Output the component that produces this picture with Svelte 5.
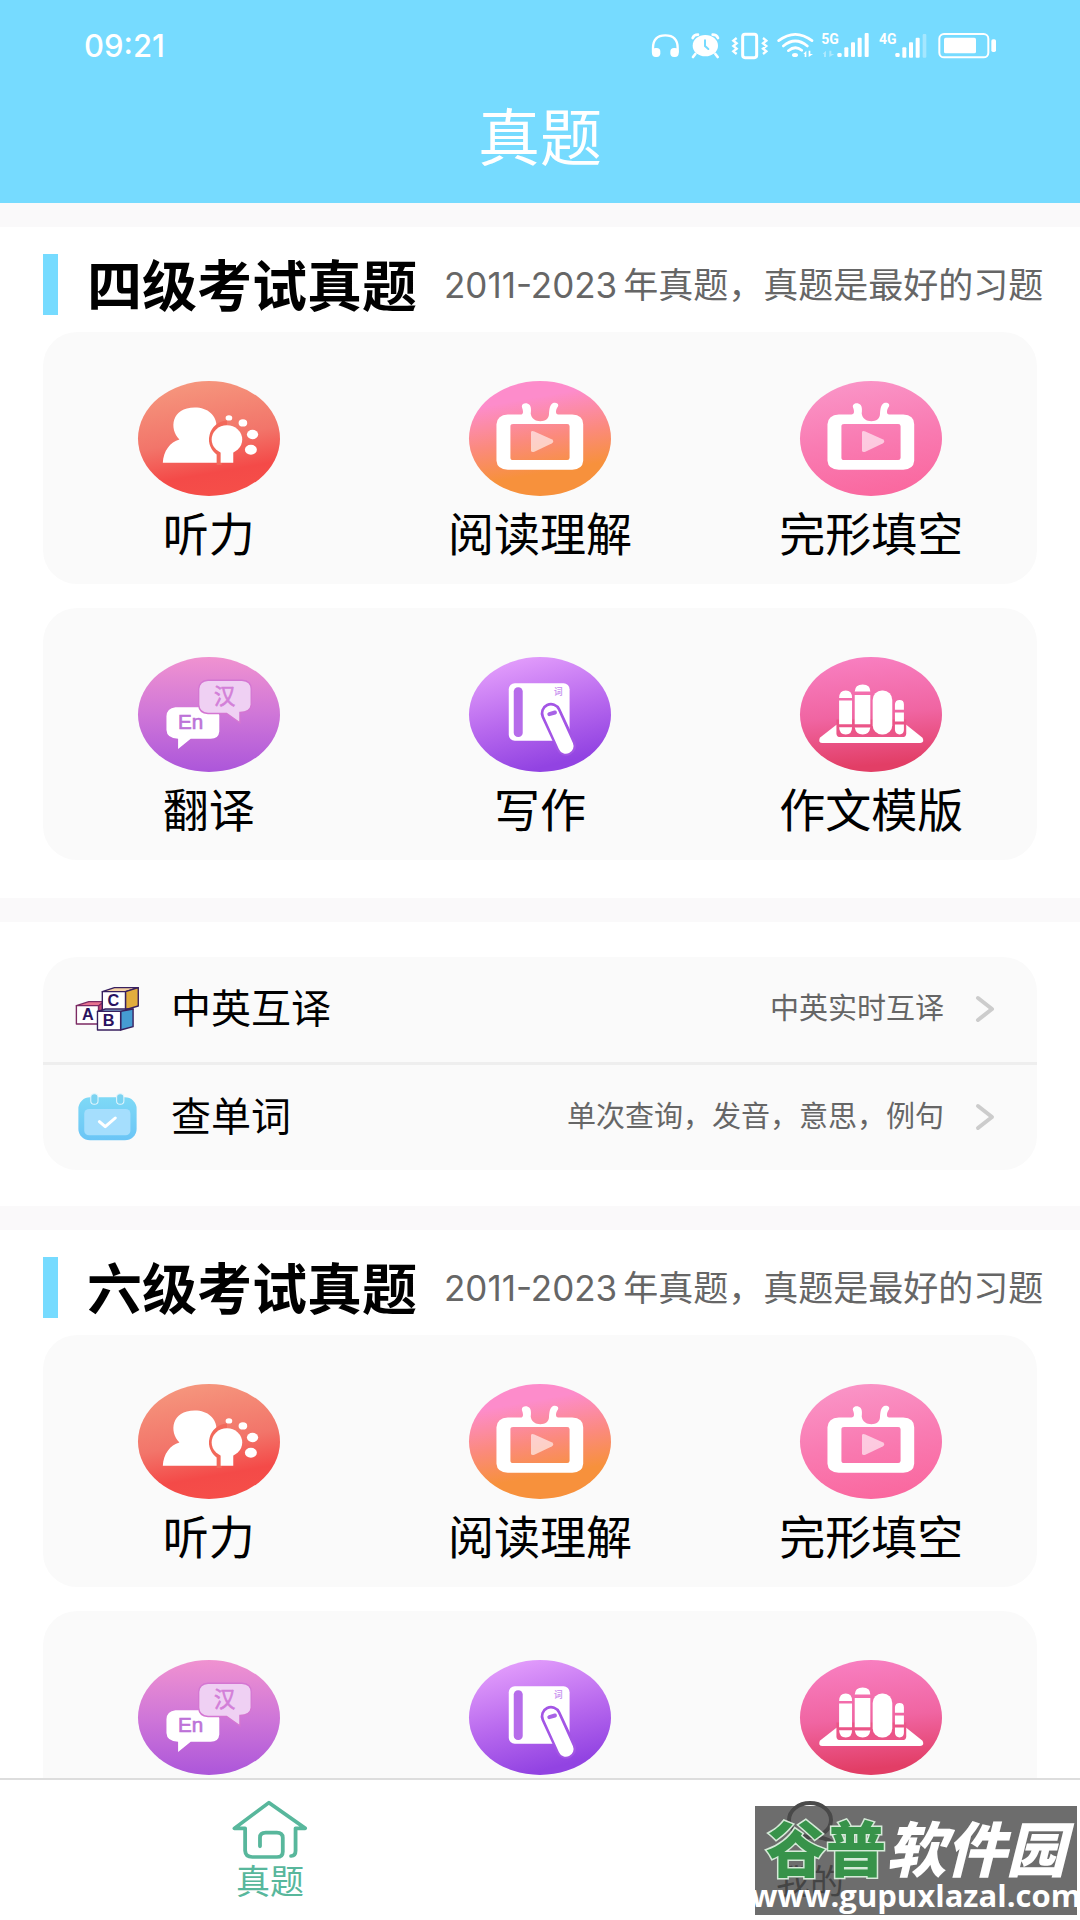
<script>
  const tiles = [
    [
      { label: '听力', kind: 'listen', x: 53, y: 62 },
      { label: '阅读理解', kind: 'read', x: 117, y: 62 },
      { label: '完形填空', kind: 'cloze', x: 117, y: 62 }
    ],
    [
      { label: '翻译', kind: 'translate', x: 53, y: 52 },
      { label: '写作', kind: 'write', x: 117, y: 52 },
      { label: '作文模版', kind: 'essay', x: 120, y: 52 }
    ]
  ];
  const note = '年真题，真题是最好的习题';
  const tools = [
    { label: '中英互译', text: '中英实时互译', kind: 'blocks' },
    { label: '查单词', text: '单次查询，发音，意思，例句', kind: 'calendar' }
  ];
</script>

{#snippet glyph(kind)}
  {#if kind === 'listen'}
    <path d="M126 308C128 272 148 246 176 238C144 206 152 142 222 142C262 142 288 166 288 200L292 308Z" fill="#fff" />
    <path d="M319 188a50 50 0 0 0-24 92V308h8" fill="none" stroke="#f2685a" stroke-width="14" />
    <ellipse cx="319" cy="238" rx="46" ry="43" fill="#fff" />
    <path d="M300 270h38v38h-38z" fill="#fff" />
    <ellipse cx="325" cy="173" rx="10" ry="8" fill="#fff" />
    <ellipse cx="367" cy="188" rx="13" ry="11" fill="#fff" />
    <ellipse cx="396" cy="223" rx="17" ry="14" fill="#fff" />
    <ellipse cx="391" cy="269" rx="18" ry="15" fill="#fff" />
  {:else if kind === 'read' || kind === 'cloze'}
    <path fill="#fff" fill-rule="evenodd" d="M232 163H270C280 163 279 152 275 142C271 130 288 124 298 134C303 140 302 152 301 160C303 176 316 183 330 183C345 183 355 176 356 162C357 146 359 134 367 129C378 125 387 131 383 139C376 148 374 163 384 163H426Q459 165 459 192V302Q457 328 426 329H232Q200 328 198 302V192Q200 165 232 163ZM248 191Q240 191 240 198V293Q240 300 248 300H411Q418 300 418 293V198Q418 191 411 191Z" />
    <path d="M302 217Q302 210 312 214L364 237Q374 243 364 250L312 275Q302 278 302 270Z" fill="#fff" opacity="0.6" />
  {:else if kind === 'translate'}
    <path d="M164 203H266Q296 205 296 228V276Q294 298 270 298H210L172 329V298Q138 297 137 272V230Q138 206 164 203Z" fill="#fff" />
    <path d="M262 122H364Q392 124 392 148V196Q390 218 358 219V250L318 222H262Q235 220 234 196V148Q236 124 262 122Z" fill="#efd0f3" stroke="#d476d2" stroke-width="4" />
    <text x="172" y="270" font-size="62" class="latin" fill="#bd72d8" stroke="#bd72d8" stroke-width="2">En</text>
    <text x="280" y="192" font-size="64" class="han" fill="#d37fd8" stroke="#d37fd8" stroke-width="2">汉</text>
  {:else if kind === 'write'}
    <rect x="235" y="131" width="183" height="173" rx="18" fill="#fff" />
    <rect x="250" y="143" width="27" height="150" rx="13" fill="#b66cea" />
    <text x="371" y="166" font-size="26" font-weight="700" class="han" fill="#cc9af0">词</text>
    <path d="M362 221L407 318" stroke="#a355e5" stroke-width="62" stroke-linecap="round" />
    <path d="M362 221L407 320" stroke="#fff" stroke-width="46" stroke-linecap="round" />
    <path d="M357 224L374 219" stroke="#a863e6" stroke-width="12" stroke-linecap="round" />
  {:else}
    <path d="M228 256L178 295Q172 311 186 311H480Q494 310 487 295L438 256Z" fill="#fff" />
    <path d="M228 240V282Q228 293 240 293H426Q438 293 438 282V240Z" fill="#eb5588" />
    <g fill="#fff">
      <path d="M236 175Q237 153 256 153T275 175ZM236 183H275V254H236ZM236 263H275Q275 285 256 285T236 263Z" />
      <path d="M283 156Q284 135 307 135T330 156ZM283 166H330V254H283ZM283 264H330Q327 285 307 285T283 264Z" />
      <rect x="337" y="153" width="59" height="132" rx="28" />
      <path d="M404 211V194Q405 181 418 181T431 194V211ZM404 219H431V246H404ZM404 255H431V272Q430 285 418 285T404 272Z" />
    </g>
  {/if}
{/snippet}

{#snippet exam(title)}
  <section class="exam">
    <div class="heading">
      <h2>{title}</h2>
      <p><span>2011-2023</span>{note}</p>
    </div>
    {#each tiles as row}
      <div class="card grid">
        {#each row as tile}
          <button class="tile">
            <span class="disc {tile.kind}">
              <svg viewBox="0 0 424 346" aria-hidden="true">
                <g transform="translate({-tile.x} {-tile.y})">{@render glyph(tile.kind)}</g>
              </svg>
            </span>
            <span class="name">{tile.label}</span>
          </button>
        {/each}
      </div>
    {/each}
  </section>
{/snippet}

<div class="app">
  <header>
    <div class="status">
      <span>09:21</span>
      <svg viewBox="90 60 1041 90" width="347" height="30" aria-hidden="true">
        <g fill="none" stroke="#fff">
          <path d="M99 128V114Q99 76 136 76T173 114V128" stroke-width="7" />
          <path d="M218 84Q222 74 234 74M294 84Q290 74 278 74M226 132L219 141M286 132L293 141" stroke-width="8" stroke-linecap="round" />
          <rect x="368" y="73" width="42" height="70" rx="7" stroke-width="9" />
          <path d="M350 84L340 92L350 100L340 108L350 116L340 124L350 132M429 84L439 92L429 100L439 108L429 116L439 124L429 132" stroke-width="7" />
          <path d="M476 92Q526 54 576 92M490 108Q526 78 562 108M505 122Q526 105 545 121" stroke-width="8" stroke-linecap="round" />
          <rect x="958" y="72" width="147" height="70" rx="14" stroke-width="6" />
        </g>
        <g fill="#fff">
          <rect x="96" y="114" width="25" height="27" rx="11" />
          <rect x="151" y="114" width="25" height="27" rx="11" />
          <ellipse cx="256" cy="107" rx="38" ry="32" />
          <ellipse cx="525" cy="135" rx="9" ry="6" />
          <path d="M550 132L559 122V141H554V132ZM566 122V132V141L579 132H571V122Z" />
          <rect x="652" y="129" width="13" height="12" rx="4" />
          <rect x="673" y="112" width="12" height="29" rx="3" />
          <rect x="693" y="97" width="12" height="44" rx="3" />
          <rect x="713" y="83" width="12" height="58" rx="3" />
          <rect x="734" y="69" width="12" height="72" rx="3" />
          <rect x="826" y="129" width="13" height="12" rx="4" />
          <rect x="847" y="112" width="12" height="31" rx="3" />
          <rect x="867" y="97" width="12" height="46" rx="3" />
          <rect x="887" y="83" width="12" height="60" rx="3" />
          <rect x="908" y="72" width="11" height="71" rx="3" opacity="0.35" />
          <path d="M608 132L618 122V141H612V132ZM628 122V141L643 132H634V122Z" opacity="0.4" />
          <rect x="972" y="83" width="96" height="47" rx="5" />
          <rect x="1114" y="88" width="14" height="38" rx="5" />
          <text x="604" y="102" font-size="42" font-weight="700" class="net">5G</text>
          <text x="777" y="102" font-size="42" font-weight="700" class="net">4G</text>
        </g>
        <path d="M255 91V108L265 117" fill="none" stroke="#76dbff" stroke-width="6" stroke-linecap="round" />
      </svg>
    </div>
    <h1>真题</h1>
  </header>

  <main>
    {@render exam('四级考试真题')}

    <section class="tools">
      <div class="card">
        {#each tools as tool}
          <button class="row">
            <span class="pic">
              {#if tool.kind === 'blocks'}
                <svg viewBox="100 138 188 138" width="65" height="46" preserveAspectRatio="none" aria-hidden="true">
                  <g stroke="#38205f" stroke-width="4" stroke-linejoin="round">
                    <path d="M104 197L140 185H184L170 197Z" fill="#e8738f" stroke="#7c2a63" />
                    <path d="M168 197L184 185V240L168 252Z" fill="#c94870" stroke="#7c2a63" />
                    <path d="M104 197H168V252H104Z" fill="#fff" stroke="#7c2a63" />
                    <path d="M179 155L214 143H283L246 155Z" fill="#f6d3a4" />
                    <path d="M246 155L283 143V198L246 209Z" fill="#e2ad3e" />
                    <path d="M179 155H246V209H179Z" fill="#fff" />
                    <path d="M165 214L188 207H268L232 214Z" fill="#8ecbea" />
                    <path d="M232 214L268 207V260L232 270Z" fill="#459cd2" />
                    <path d="M165 214H232V270H165Z" fill="#fff" />
                  </g>
                  <g fill="#2a1260" font-weight="700" font-size="47" class="latin" text-anchor="middle">
                    <text x="137" y="241">A</text>
                    <text x="211" y="199">C</text>
                    <text x="197" y="259">B</text>
                  </g>
                </svg>
              {:else}
                <svg viewBox="106 458 177 144" width="61" height="48" preserveAspectRatio="none" aria-hidden="true">
                  <defs>
                    <linearGradient id="cal" x1="0" y1="0" x2="0" y2="1">
                      <stop offset="0" stop-color="#7ed9f6" />
                      <stop offset="1" stop-color="#6bc5f6" />
                    </linearGradient>
                  </defs>
                  <rect x="110" y="471" width="169" height="129" rx="34" fill="url(#cal)" />
                  <rect x="127" y="506" width="134" height="79" rx="14" fill="#a5defd" />
                  <rect x="146" y="460" width="21" height="32" rx="10" fill="#7cd3f1" stroke="#e4f6fd" stroke-width="3" />
                  <rect x="221" y="460" width="21" height="32" rx="10" fill="#7cd3f1" stroke="#e4f6fd" stroke-width="3" />
                  <path d="M171 544L188 559L217 533" fill="none" stroke="#fff" stroke-width="9" stroke-linecap="round" stroke-linejoin="round" />
                </svg>
              {/if}
            </span>
            <span class="what">{tool.label}</span>
            <span class="desc">{tool.text}</span>
            <svg width="20" height="28" viewBox="0 0 20 28" aria-hidden="true">
              <path d="M3 3L17 14L3 25" fill="none" stroke="#ccc" stroke-width="4" stroke-linecap="round" stroke-linejoin="round" />
            </svg>
          </button>
        {/each}
      </div>
    </section>

    {@render exam('六级考试真题')}
  </main>

  <nav>
    <a href="#papers" class="active" aria-current="page">
      <svg viewBox="674 180 220 180" width="76" height="60" preserveAspectRatio="none" aria-hidden="true">
        <path d="M845 348Q858 347 858 332V265H886L781 188L681 265H712V332Q713 351 733 351H804Q821 351 821 335V293Q820 278 804 278H772Q755 278 755 293V319" fill="none" stroke="#58b79c" stroke-width="11" stroke-linecap="round" stroke-linejoin="round" />
      </svg>
      <span>真题</span>
    </a>
    <a href="#mine">
      <svg viewBox="0 0 76 60" width="76" height="60" aria-hidden="true">
        <g fill="none" stroke="#4a4a4a" stroke-width="4">
          <ellipse cx="38" cy="20" rx="21" ry="17" />
          <path d="M8 58Q10 38 38 37T68 58" />
        </g>
      </svg>
      <span>我的</span>
    </a>
  </nav>

  <div class="mark">
    <strong><em>谷普</em>软件园</strong>
    <span>www.gupuxlazal.com</span>
  </div>
</div>

<style>
  :global(body) {
    margin: 0;
    background: #fff;
  }
  .app {
    position: relative;
    display: flex;
    flex-direction: column;
    height: 100vh;
    overflow: hidden;
    color: #000;
    font-family: Inter, 'Noto Sans CJK SC', sans-serif;
  }
  h1, h2, p {
    margin: 0;
    font-weight: 400;
  }
  button {
    padding: 0;
    border: 0;
    background: none;
    color: inherit;
    font: inherit;
    cursor: pointer;
  }
  svg {
    display: block;
    flex: none;
  }
  .latin {
    font-family: 'Liberation Sans', sans-serif;
  }
  .net {
    font-family: Roboto, sans-serif;
  }
  .han {
    font-family: 'Noto Sans CJK SC', sans-serif;
  }

  header {
    flex: none;
    background: #76dbff;
    color: #fff;
    padding: 29px 0 24px;
  }
  .status {
    display: flex;
    align-items: center;
    justify-content: space-between;
    height: 32px;
    padding: 0 83px 0 84px;
    font-size: 31px;
    font-weight: 500;
  }
  h1 {
    padding-top: 38px;
    font-size: 62px;
    line-height: 80px;
    text-align: center;
  }

  main {
    flex: 1;
    min-height: 0;
    overflow-y: auto;
    scrollbar-width: none;
  }
  section {
    border-top: 24px solid #faf9fa;
  }
  .card {
    margin: 0 43px;
    border-radius: 34px;
    background: #fafafa;
  }
  .exam {
    padding: 27px 0 38px;
  }
  .heading {
    display: flex;
    align-items: center;
    gap: 27px;
    height: 61px;
    margin: 0 0 17px 43px;
    border-left: 15px solid #76dbff;
    padding-left: 29px;
    white-space: nowrap;
  }
  h2 {
    padding-top: 2px;
    font-size: 55px;
    line-height: 60px;
    font-weight: 700;
  }
  p {
    color: #666;
    font-size: 35px;
    line-height: 40px;
  }
  p span {
    margin-right: 6px;
  }
  .grid {
    display: grid;
    grid-template-columns: repeat(3, 1fr);
  }
  .grid + .grid {
    margin-top: 24px;
  }
  .tile {
    display: flex;
    flex-direction: column;
    align-items: center;
    gap: 12px;
    padding: 49px 0 24px;
  }
  .disc {
    width: 142px;
    height: 115px;
    border-radius: 50%;
    overflow: hidden;
  }
  .disc svg {
    width: 100%;
    height: 100%;
  }
  .listen { background: linear-gradient(170deg, #f69b80, #f2756a 50%, #f44a48 75%, #f65049); }
  .read { background: linear-gradient(170deg, #fd8ccb 20%, #fb8a7c 50%, #f7913c 75%); }
  .cloze { background: linear-gradient(170deg, #fa98ca, #f97bb2 50%, #fa649b); }
  .translate { background: linear-gradient(180deg, #f092d0, #cf76d8 50%, #ac56da); }
  .write { background: linear-gradient(165deg, #e19bfb 10%, #b869ee 50%, #9243e2 85%); }
  .essay { background: linear-gradient(175deg, #f981c3, #f065a2 50%, #e23e66 90%); }
  .name {
    font-size: 46px;
    line-height: 52px;
  }

  .tools {
    padding: 35px 0 36px;
  }
  .row {
    display: flex;
    align-items: center;
    width: 100%;
    height: 105px;
    padding: 0 42px 2px 32px;
  }
  .row + .row {
    height: 108px;
    border-top: 3px solid #eee;
  }
  .pic {
    display: flex;
    justify-content: center;
    width: 65px;
    margin-right: 31px;
  }
  .what,
  .desc {
    padding-bottom: 5px;
  }
  .what {
    font-size: 40px;
  }
  .desc {
    margin: 0 31px 0 auto;
    color: #666;
    font-size: 29px;
  }

  nav {
    flex: none;
    display: grid;
    grid-template-columns: 1fr 1fr;
    border-top: 2px solid #ddd;
    background: #fff;
  }
  nav a {
    display: flex;
    flex-direction: column;
    align-items: center;
    gap: 2px;
    padding: 20px 0 18px;
    color: #333;
    font-size: 34px;
    line-height: 40px;
    text-decoration: none;
  }
  nav .active {
    color: #58b79c;
  }

  .mark {
    position: absolute;
    right: 3px;
    bottom: 5px;
    display: flex;
    flex-direction: column;
    align-items: center;
    width: 322px;
    height: 109px;
    background: rgba(72, 72, 72, 0.8);
    color: #fff;
    white-space: nowrap;
  }
  .mark strong {
    padding-top: 15px;
    font-size: 60px;
    line-height: 58px;
    font-weight: 900;
    font-style: italic;
  }
  .mark em {
    color: #37934a;
    font-style: normal;
    -webkit-text-stroke: 3px #d5ead8;
    paint-order: stroke fill;
  }
  .mark span {
    font-family: 'Open Sans', sans-serif;
    font-size: 31px;
    line-height: 32px;
    font-weight: 700;
  }
</style>
